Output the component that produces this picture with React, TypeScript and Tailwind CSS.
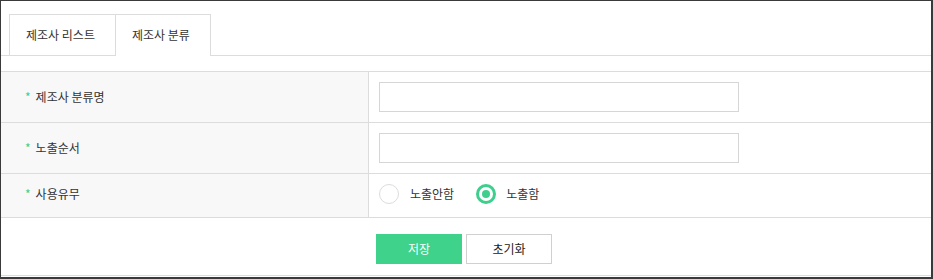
import React from "react";

const rows = [
  { label: "제조사 분류명", type: "input" },
  { label: "노출순서", type: "input" },
];

const App: React.FC = () => {
  return (
    <div
      className="w-[933px] h-[279px] bg-white border-l border-t border-r-2 border-b-2 border-[#3a3a3a] text-[12px] text-[#333]"
      style={{ fontFamily: '"Noto Sans CJK KR", "Noto Sans", sans-serif' }}
    >
      {/* tabs */}
      <div className="flex pl-[8px] pt-[13px] border-b border-[#dcdcdc]">
        <div className="w-[106px] h-[41px] border-l border-t border-[#dcdcdc] flex items-center pl-[16px] bg-white">
          제조사 리스트
        </div>
        <div className="w-[96px] h-[42px] -mb-px border-l border-t border-r border-[#dcdcdc] flex items-center pl-[16px] pb-px bg-white">
          제조사 분류
        </div>
      </div>

      {/* form table */}
      <div className="mt-[15px] border-t border-[#dcdcdc]">
        {rows.map((r) => (
          <div key={r.label} className="flex h-[51px] border-b border-[#dcdcdc]">
            <div className="w-[368px] bg-[#f8f8f8] border-r border-[#dcdcdc] flex items-center pl-[24px]">
              <span className="text-[#3ecf8e] mr-[5px]">*</span>
              {r.label}
            </div>
            <div className="flex-1 flex items-center pl-[10px]">
              <input className="w-[360px] h-[30px] border border-[#d6d6d6] bg-white outline-none px-2" />
            </div>
          </div>
        ))}
        <div className="flex h-[44px] border-b border-[#dcdcdc]">
          <div className="w-[368px] bg-[#f8f8f8] border-r border-[#dcdcdc] flex items-center pl-[24px] pb-[3px]">
            <span className="text-[#3ecf8e] mr-[5px]">*</span>
            사용유무
          </div>
          <div className="flex-1 flex items-center pl-[10px] pb-[3px]">
            <span className="w-[20px] h-[20px] rounded-full border border-[#dcdcdc] bg-white" />
            <span className="ml-[11px]">노출안함</span>
            <span className="ml-[22px] w-[20px] h-[20px] rounded-full border-[3px] border-[#3ecf8e] flex items-center justify-center">
              <span className="w-[8px] h-[8px] rounded-full bg-[#3ecf8e]" />
            </span>
            <span className="ml-[10px]">노출함</span>
          </div>
        </div>
      </div>

      {/* buttons */}
      <div className="flex justify-center gap-[4px] pt-[16px] pb-[11px] pr-[4px] border-b border-[#dcdcdc]">
        <button className="w-[86px] h-[30px] bg-[#3ed28b] text-white">저장</button>
        <button className="w-[86px] h-[30px] border border-[#d0d0d0] bg-white text-[#222]">초기화</button>
      </div>
    </div>
  );
};

export default App;
